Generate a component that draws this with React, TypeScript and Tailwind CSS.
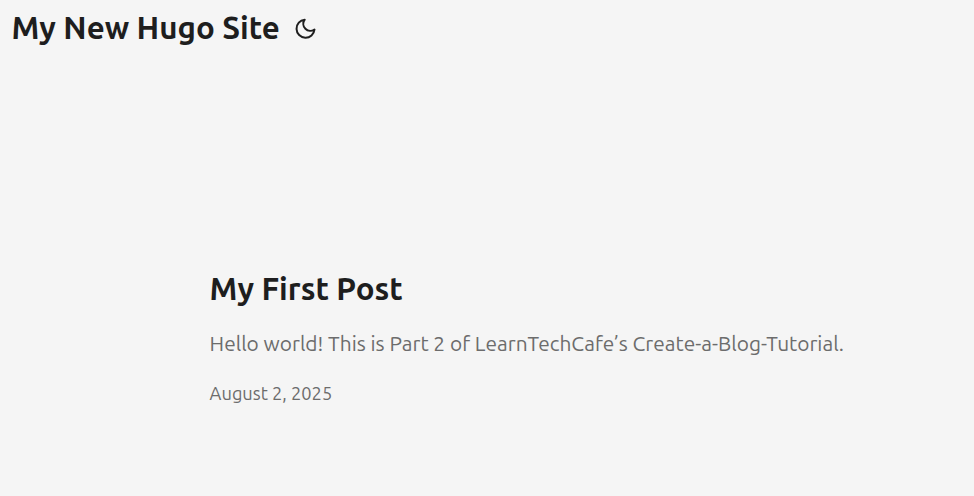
import React from "react";

export default function App() {
  return (
    <div className="h-[496px] w-[974px] overflow-hidden bg-[#f5f5f5] font-['Ubuntu','Open_Sans',sans-serif] text-[#1e1e1e]">
      <header className="flex h-[60px] items-start pl-[11.4px]">
        <a className="mt-[8px] w-[268px] whitespace-nowrap text-[31.3px] font-bold leading-[40px]">My New Hugo Site</a>
        <button aria-label="Toggle theme" className="ml-[14.6px] mt-[17px]">
          <svg width="24" height="24" viewBox="0.5 0.3 24 24" fill="none" stroke="currentColor" strokeWidth="2" strokeLinecap="round" strokeLinejoin="round">
            <path d="M21 12.79A9 9 0 1 1 11.21 3 7 7 0 0 0 21 12.79z" />
          </svg>
        </button>
      </header>
      <main className="pl-[209.6px] pt-[209px]">
        <article>
          <h2 className="whitespace-nowrap text-[31.3px] font-bold leading-[40px]">My First Post</h2>
          <p className="mt-[19px] whitespace-nowrap text-[20.88px] font-normal leading-[32px] text-[#6c6c6c]">Hello world! This is Part 2 of LearnTechCafe’s Create-a-Blog-Tutorial.</p>
          <footer className="mt-[21px] whitespace-nowrap text-[18.25px] font-normal leading-[24px] text-[#6c6c6c]">August 2, 2025</footer>
        </article>
      </main>
    </div>
  );
}
